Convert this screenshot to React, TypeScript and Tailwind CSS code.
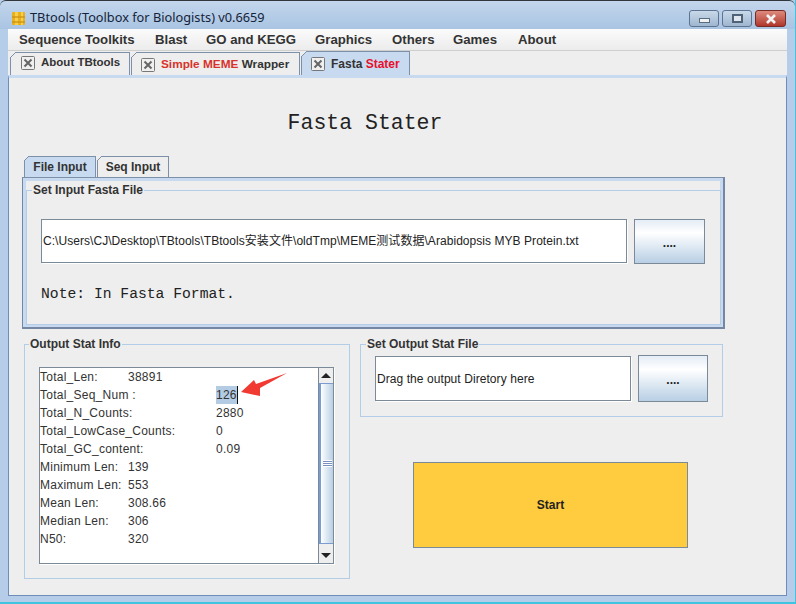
import type { ReactNode } from "react";

const stats = [
  ["Total_Len:", "38891", "w-[88px]"],
  ["Total_Seq_Num :", "126", "w-[176px]"],
  ["Total_N_Counts:", "2880", "w-[176px]"],
  ["Total_LowCase_Counts:", "0", "w-[176px]"],
  ["Total_GC_content:", "0.09", "w-[176px]"],
  ["Minimum Len:", "139", "w-[88px]"],
  ["Maximum Len:", "553", "w-[88px]"],
  ["Mean Len:", "308.66", "w-[88px]"],
  ["Median Len:", "306", "w-[88px]"],
  ["N50:", "320", "w-[88px]"],
];

function CloseBox() {
  return (
    <svg width="14" height="14" viewBox="0 0 14 14" className="shrink-0">
      <rect x="0.5" y="0.5" width="13" height="13" rx="1" fill="#f0f0f0" stroke="#777" />
      <path d="M3.5 3.5l7 7M10.5 3.5l-7 7" stroke="#666" strokeWidth="2" />
    </svg>
  );
}

function Corner({ size, fill, line }: { size: number; fill: string; line: string }) {
  return (
    <svg width={size} height={size} viewBox={`0 0 ${size} ${size}`} className="absolute -left-px -top-px">
      <path d={`M0 0H${size}L0 ${size}Z`} fill={fill} />
      <path d={`M0 ${size}L${size} 0`} stroke={line} />
    </svg>
  );
}

function TopTab({ className, active, raised, children }: { className: string; active?: boolean; raised?: boolean; children: ReactNode }) {
  return (
    <div
      className={`relative flex items-center gap-[6px] border-x border-t border-[#7c90aa] font-bold text-[#333] ${className} ${
        active ? "h-[24px] bg-[#c8daef]" : "h-[23px] bg-[#eeeeee]"
      } ${raised ? "pb-[3px]" : "pt-px"}`}
    >
      <Corner size={6} fill="#eeeeee" line="#7c90aa" />
      <CloseBox />
      <span>{children}</span>
    </div>
  );
}

function Browse({ size }: { size: string }) {
  return (
    <div
      className={`flex items-center justify-center border border-[#7a8a99] bg-gradient-to-b from-[#e4ecf5] via-[#ffffff] via-30% to-[#b8cfe4] pt-[2px] text-[12px] font-bold text-[#222] ${size}`}
    >
      ....
    </div>
  );
}

function Legend({ left, children }: { left: string; children: ReactNode }) {
  return (
    <span className={`absolute top-[-8px] bg-[#eeeeee] px-px text-[12px] leading-[14px] font-bold text-[#333] ${left}`}>
      {children}
    </span>
  );
}

export default function App() {
  return (
    <div className="relative flex h-[604px] w-[796px] flex-col overflow-hidden border-b-2 border-r border-b-[#3fc4e0] border-r-[#3fc4e0] bg-[#b5cde8] font-['Liberation_Sans',sans-serif]">
      {/* title bar */}
      <div className="flex h-[29px] items-center justify-between rounded-t-[6px] border-t border-[#30363c] bg-gradient-to-b from-[#c3d6ec] to-[#a9c4e2] pl-[12px] pr-[9px]">
        <div className="flex items-center gap-[5px] pt-[6px]">
          <svg width="13" height="13" viewBox="0 0 13 13">
            <rect width="13" height="13" rx="1" fill="#e8b020" />
            <path d="M3 0h3v13H3zM9 0h2v13H9z" fill="#f7d04a" />
            <path d="M0 4h13v2H0zM0 9h13v2H0z" fill="#cf9412" opacity="0.7" />
          </svg>
          <span className="font-['Noto_Sans',sans-serif] text-[12.75px] text-[#14233a]">TBtools (Toolbox for Biologists) v0.6659</span>
        </div>
        <div className="flex gap-[3px] self-start pt-[9px]">
          <div className="flex h-[17px] w-[30px] items-center justify-center rounded-[3px] border border-[#5c7492] bg-gradient-to-b from-[#c9d9ea] to-[#9fb6cf]">
            <div className="mt-[3px] h-[5px] w-[11px] border border-[#596d80] bg-[#f2f2f2]" />
          </div>
          <div className="flex h-[17px] w-[30px] items-center justify-center rounded-[3px] border border-[#5c7492] bg-gradient-to-b from-[#c9d9ea] to-[#9fb6cf]">
            <div className="h-[9px] w-[11px] border-2 border-[#4f6378] bg-[#dfe6ee]" />
          </div>
          <div className="flex h-[17px] w-[31px] items-center justify-center rounded-[3px] border border-[#7a2a24] bg-gradient-to-b from-[#dd8a7e] to-[#b0352c]">
            <svg width="12" height="10" viewBox="0 0 12 10">
              <path d="M2 1l8 8M10 1l-8 8" stroke="#f4f4f4" strokeWidth="2.6" />
            </svg>
          </div>
        </div>
      </div>

      {/* menu bar */}
      <div className="mx-[8px] flex h-[22px] items-center border-b border-[#cfcfcf] bg-gradient-to-b from-[#fbfbfb] to-[#ececec] pl-[11px] text-[13.2px] font-bold text-[#333]">
        <span className="w-[136px]">Sequence Toolkits</span>
        <span className="w-[51px]">Blast</span>
        <span className="w-[109px]">GO and KEGG</span>
        <span className="w-[77px]">Graphics</span>
        <span className="w-[61px]">Others</span>
        <span className="w-[65px]">Games</span>
        <span>About</span>
      </div>

      {/* document tabs */}
      <div className="mx-[8px] flex h-[24px] items-end gap-px bg-[#eeeeee] pl-[2px]">
        <TopTab className="w-[120px] pl-[10px] text-[11.5px]" raised>
          About TBtools
        </TopTab>
        <TopTab className="w-[169px] pl-[9px] text-[11.8px]">
          <span className="text-[#d8322a]">Simple MEME</span> Wrapper
        </TopTab>
        <TopTab className="w-[109px] pl-[9px] text-[12px]" active>
          Fasta <span className="text-[#e8102c]">Stater</span>
        </TopTab>
      </div>

      {/* main panel */}
      <div className="mx-[8px] flex h-[521px] flex-col border border-[#6f8cbb] border-t-[3px] border-t-[#c8daef] bg-[#eeeeee] pl-[13px]">
        <div className="flex h-[78px] items-start justify-center pr-[78px] pt-[31px]">
          <span className="font-['Liberation_Mono',monospace] text-[21.5px] leading-[28px] text-[#222]">Fasta Stater</span>
        </div>

        {/* inner tabs */}
        <div className="flex h-[21px] items-end gap-px pl-[2px] text-[12px] font-bold text-[#333]">
          <div className="relative flex h-[21px] w-[72px] items-center justify-center border-x border-t border-[#7c90aa] bg-[#c8daef] pb-px">
            <Corner size={5} fill="#eeeeee" line="#7c90aa" />
            File Input
          </div>
          <div className="relative flex h-[21px] w-[72px] items-center justify-center border-x border-t border-[#7c90aa] bg-[#eeeeee] pb-px">
            <Corner size={5} fill="#eeeeee" line="#7c90aa" />
            Seq Input
          </div>
        </div>

        <div className="h-[152px] w-[703px] border-y-2 border-l border-r-2 border-[#7588a3] border-t-[1px] p-[3px] [border-top-color:#7c90aa] [box-shadow:inset_0_0_0_3px_#c8daef]">
          <div className="relative mt-[9px] flex h-[135px] w-[695px] flex-col border border-[#b3cde6] px-[14px] pt-[28px]">
            <Legend left="left-[5px]">Set Input Fasta File</Legend>
            <div className="flex gap-[7px]">
              <div className="flex h-[44px] w-[586px] items-center border border-[#7a8a99] bg-white pl-px font-['Liberation_Sans','Noto_Sans_CJK_SC',sans-serif] text-[12px] tracking-[0.05px] text-[#222] [box-shadow:1px_1px_0_#fff]">
                C:\Users\CJ\Desktop\TBtools\TBtools安装文件\oldTmp\MEME测试数据\Arabidopsis MYB Protein.txt
              </div>
              <Browse size="h-[45px] w-[71px]" />
            </div>
            <div className="mt-[21px] font-['Liberation_Mono',monospace] text-[14.7px] leading-[18px] text-[#222]">
              Note: In Fasta Format.
            </div>
          </div>
        </div>

        {/* lower half */}
        <div className="mt-[15px] flex items-start gap-[10px] pl-[2px]">
          <div className="relative h-[235px] w-[326px] border border-[#b3cde6] pl-[14px] pt-[22px]">
            <Legend left="left-[4px]">Output Stat Info</Legend>
            <div className="flex h-[197px] w-[295px] border border-[#7a8a99] bg-white [box-shadow:1px_1px_0_#fff]">
              <div className="relative flex-1 text-[12px] leading-[18px] tracking-[0.25px] text-[#333]">
                {stats.map(([label, value, width]) => (
                  <div key={label} className="flex h-[18px]">
                    <span className={width}>{label}</span>
                    <span className={label === "Total_Seq_Num :" ? "border-r border-[#111] bg-[#b4cbe4]" : ""}>{value}</span>
                  </div>
                ))}
              </div>
              <div className="flex w-[15px] flex-col border-l border-[#7a8a99] bg-[#eeeeee]">
                <div className="flex h-[15px] items-center justify-center">
                  <div className="h-0 w-0 border-x-[5px] border-b-[5px] border-x-transparent border-b-[#222]" />
                </div>
                <div className="flex flex-1 items-center justify-center border-y border-[#7c9bd0] border-l-2 border-l-[#7c9bd0] bg-gradient-to-r from-[#ffffff] to-[#b8cfe6]">
                  <div className="flex w-[9px] flex-col gap-px bg-white py-px">
                    <div className="h-px bg-[#7c90c0]" />
                    <div className="h-px bg-[#7c90c0]" />
                    <div className="h-px bg-[#7c90c0]" />
                  </div>
                </div>
                <div className="flex h-[19px] items-center justify-center pt-[3px]">
                  <div className="h-0 w-0 border-x-[5px] border-t-[5px] border-x-transparent border-t-[#222]" />
                </div>
              </div>
            </div>
          </div>

          <div className="flex flex-col">
            <div className="relative flex h-[73px] w-[363px] gap-[7px] border border-[#b3cde6] pl-[14px] pt-[10px]">
              <Legend left="left-[5px]">Set Output Stat File</Legend>
              <div className="mt-px flex h-[45px] w-[256px] items-center border border-[#7a8a99] bg-white pl-px text-[12px] tracking-[0.07px] text-[#222] [box-shadow:1px_1px_0_#fff]">
                Drag the output Diretory here
              </div>
              <Browse size="h-[47px] w-[70px]" />
            </div>
            <div className="ml-[53px] mt-[45px] flex h-[86px] w-[275px] items-center justify-center border border-[#7a8a99] bg-[#ffcc40] text-[12px] font-bold text-[#222]">
              Start
            </div>
          </div>
        </div>
      </div>

      {/* annotation arrow */}
      <svg width="796" height="604" viewBox="0 0 796 604" className="pointer-events-none absolute left-0 top-0">
        <path d="M241 392L254 380L256 384L287 373L260 388L260 396Z" fill="#f03a32" />
      </svg>
    </div>
  );
}
